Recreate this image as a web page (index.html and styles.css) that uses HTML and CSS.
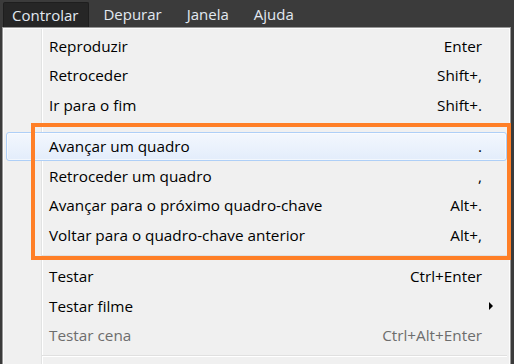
FILE: index.html
```html
<!DOCTYPE html>
<html lang="pt-BR">
<head>
    <meta charset="UTF-8">
    <title>Controlar</title>
    <link rel="stylesheet" href="styles.css">
</head>
<body>
    <div class="menubar">
        <div class="menubar-item active">Controlar</div>
        <div class="menubar-item">Depurar</div>
        <div class="menubar-item">Janela</div>
        <div class="menubar-item">Ajuda</div>
    </div>

    <div class="menu">
        <div class="row"><span class="label">Reproduzir</span><span class="key">Enter</span><span></span></div>
        <div class="row"><span class="label">Retroceder</span><span class="key">Shift+,</span><span></span></div>
        <div class="row"><span class="label">Ir para o fim</span><span class="key">Shift+.</span><span></span></div>

        <div class="sep"></div>

        <div class="group marked">
            <div class="row hover"><span class="label">Avançar um quadro</span><span class="key">.</span><span></span></div>
            <div class="row"><span class="label">Retroceder um quadro</span><span class="key">,</span><span></span></div>
            <div class="row"><span class="label">Avançar para o próximo quadro-chave</span><span class="key">Alt+.</span><span></span></div>
            <div class="row"><span class="label">Voltar para o quadro-chave anterior</span><span class="key">Alt+,</span><span></span></div>
        </div>

        <div class="sep"></div>

        <div class="row"><span class="label">Testar</span><span class="key">Ctrl+Enter</span><span></span></div>
        <div class="row"><span class="label">Testar filme</span><span class="key"></span><span class="arrow"></span></div>
        <div class="row disabled"><span class="label">Testar cena</span><span class="key">Ctrl+Alt+Enter</span><span></span></div>

        <div class="sep"></div>
    </div>
</body>
</html>
```

FILE: styles.css
```css
* {
    margin: 0;
    padding: 0;
    box-sizing: border-box;
}

body {
    background: #3b3b3b;
    font-family: 'Open Sans', 'Noto Sans', sans-serif;
    font-size: 15.3px;
    overflow: hidden;
    height: 364px;
}

/* barra de menus */
.menubar {
    display: flex;
    gap: 5px;
    height: 27px;
    padding: 2px 0 0 3px;
    background: #3b3b3b;
}

.menubar-item {
    padding: 0 11px 0 9px;
    color: #e2e9f1;
    line-height: 24px;
    font-size: 15px;
}

.menubar-item.active {
    background: #262626;
    border: 1px solid #1e1e1e;
    border-bottom: none;
    border-radius: 2px 2px 0 0;
    padding: 0 10px 0 8px;
    line-height: 24px;
}

/* menu suspenso */
.menu {
    margin: 0 3px 0 2px;
    padding: 3px 3px 0 3px;
    border: 1px solid #979797;
    border-bottom: none;
    box-shadow: inset 1px 1px 0 #fcfcfc, inset -1px 0 0 #fcfcfc;
    background:
        linear-gradient(to right, transparent 38px, #e2e3e3 38px, #e2e3e3 39px, #fff 39px, #fff 40px, transparent 40px),
        #f0f0f0;
    height: 337px;
}

.row {
    display: grid;
    grid-template-columns: 1fr auto 24px;
    align-items: center;
    height: 29.5px;
    padding-left: 42px;
    color: #000;
    border: 1px solid transparent;
    border-radius: 3px;
}

.row.hover {
    border-color: #aecff7;
    background: linear-gradient(#f3f7fd, #e3edfb);
    box-shadow: inset 0 0 0 1px rgba(255, 255, 255, 0.55);
}

.row.disabled {
    color: #6d6d6d;
}

.key {
    text-align: right;
}

.arrow {
    justify-self: start;
    margin-left: 7px;
    width: 0;
    height: 0;
    border-top: 4px solid transparent;
    border-bottom: 4px solid transparent;
    border-left: 4px solid #000;
}

.sep {
    height: 12px;
    margin-left: 36px;
    background: linear-gradient(to bottom, transparent 5px, #e0e0e0 5px, #e0e0e0 6px, #fff 6px, #fff 7px, transparent 7px);
}

/* destaque laranja */
.group {
    position: relative;
}

.group.marked::after {
    content: '';
    position: absolute;
    top: -8.5px;
    left: 25px;
    right: -4px;
    bottom: -10.5px;
    border: 4px solid #ff7f27;
    pointer-events: none;
}
```
